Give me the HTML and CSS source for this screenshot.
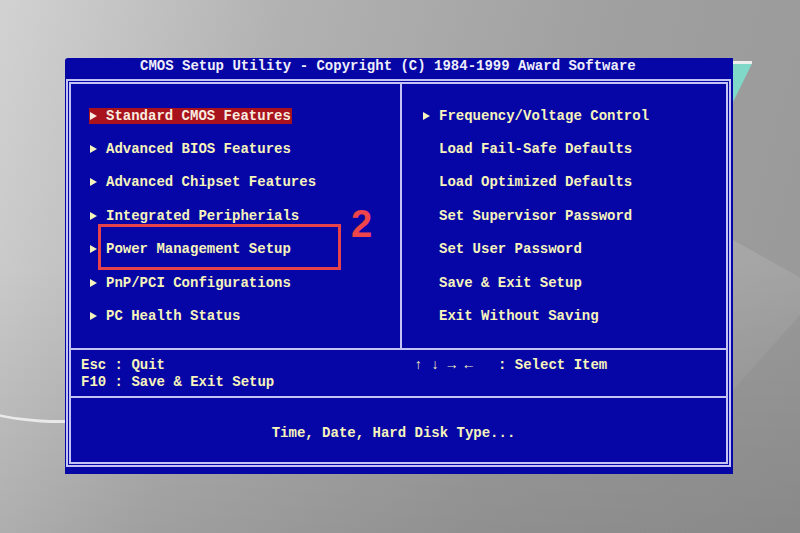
FILE: index.html
```html
<!DOCTYPE html>
<html lang="en">
<head>
  <meta charset="UTF-8" />
  <title>CMOS Setup Utility</title>
  <link rel="stylesheet" href="styles.css">
</head>
<body>
  <!-- photo background bits -->
  <div class="deco-teal"></div>
  <div class="deco-edge"></div>
  <div class="deco-shine"></div>
  <div class="deco-arc"></div>

  <div class="bios">
    <div class="title">CMOS Setup Utility - Copyright (C) 1984-1999 Award Software</div>

    <div class="frame">
      <div class="menu">
        <ul class="col left">
          <li class="sub"><span class="sel">Standard CMOS Features</span></li>
          <li class="sub"><span>Advanced BIOS Features</span></li>
          <li class="sub"><span>Advanced Chipset Features</span></li>
          <li class="sub"><span>Integrated Peripherials</span></li>
          <li class="sub"><span>Power Management Setup</span></li>
          <li class="sub"><span>PnP/PCI Configurations</span></li>
          <li class="sub"><span>PC Health Status</span></li>
        </ul>
        <ul class="col right">
          <li class="sub"><span>Frequency/Voltage Control</span></li>
          <li class="plain"><span>Load Fail-Safe Defaults</span></li>
          <li class="plain"><span>Load Optimized Defaults</span></li>
          <li class="plain"><span>Set Supervisor Password</span></li>
          <li class="plain"><span>Set User Password</span></li>
          <li class="plain"><span>Save &amp; Exit Setup</span></li>
          <li class="plain"><span>Exit Without Saving</span></li>
        </ul>
      </div>

      <div class="keys">
        <div>Esc : Quit</div>
        <div>↑ ↓ → ←   : Select Item</div>
        <div>F10 : Save &amp; Exit Setup</div>
        <div></div>
      </div>

      <div class="help">Time, Date, Hard Disk Type...</div>
    </div>

    <!-- annotation -->
    <div class="mark-box"></div>
    <div class="mark-num">2</div>
  </div>
</body>
</html>
```

FILE: styles.css
```css
body {
  margin: 0;
  height: 533px;
  overflow: hidden;
  position: relative;
  font-family: "Liberation Mono", "DejaVu Sans Mono", monospace;
  background:
    linear-gradient(180deg, rgba(0,0,0,0) 50%, rgba(0,0,0,0.1) 100%),
    linear-gradient(105deg, #d2d2d2 0%, #b2b2b2 30%, #a0a0a0 65%, #989898 100%);
}
.deco-teal {
  position: absolute;
  left: 731px;
  top: 62px;
  width: 21px;
  height: 40px;
  background: #7fd8c8;
  clip-path: polygon(0 4%, 100% 4%, 10% 100%, 0 100%);
}
.deco-edge {
  position: absolute;
  left: 733px;
  top: 61px;
  width: 19px;
  height: 3px;
  background: #eeeeee;
}
.deco-shine {
  position: absolute;
  left: 733px;
  top: 240px;
  width: 67px;
  height: 150px;
  background: linear-gradient(160deg, rgba(255,255,255,0.12), rgba(255,255,255,0.03));
  clip-path: polygon(0 0, 100% 25%, 100% 50%, 0 100%);
}
.deco-arc {
  position: absolute;
  left: -40px;
  top: 360px;
  width: 200px;
  height: 60px;
  border-radius: 50%;
  border-bottom: 3px solid rgba(255,255,255,0.7);
}
.bios {
  position: relative;
  width: 668px;
  height: 416px;
  margin: 58px 0 0 65px;
  background-color: #0606a6;
  color: #f6f4bc;
  font-size: 14px;
  font-weight: bold;
  box-sizing: border-box;
  padding: 0 2px 7px 1px;
  border-top-left-radius: 3px;
}
.title {
  height: 21px;
  line-height: 16px;
  padding-left: 74px;
  color: #eeeefa;
  white-space: pre;
}
.frame {
  border: 5px double #c4c4f4;
  height: 388px;
  box-sizing: border-box;
  display: flex;
  flex-direction: column;
}
.menu {
  display: flex;
  height: 264px;
  border-bottom: 2px solid #c4c4f4;
}
.col {
  list-style: none;
  margin: 0;
  padding: 15px 0 0;
}
.col.left {
  width: 331px;
  padding-left: 18px;
  box-sizing: border-box;
  border-right: 2px solid #c4c4f4;
}
.col.right {
  padding-left: 20px;
}
.col li {
  height: 33.4px;
  display: flex;
  align-items: center;
  white-space: pre;
}
.col li span {
  display: inline-flex;
  align-items: center;
  height: 16px;
  padding: 0 1px;
}
.col li.sub span::before {
  content: "";
  width: 0;
  height: 0;
  border-left: 7px solid currentColor;
  border-top: 4.5px solid transparent;
  border-bottom: 4.5px solid transparent;
  margin-right: 9px;
}
.col li.plain span {
  padding-left: 17px;
}
.col li span.sel {
  background-color: #a8121c;
  color: #f8ece0;
}
.keys {
  height: 48px;
  box-sizing: border-box;
  padding: 7px 0 0 10px;
  display: grid;
  grid-template-columns: 333px auto;
  grid-auto-rows: 17px;
  line-height: 17px;
  white-space: pre;
  border-bottom: 2px solid #c4c4f4;
}
.help {
  flex: 1;
  padding-top: 8px;
  line-height: 54px;
  text-align: center;
  padding-right: 10px;
}
.mark-box {
  position: absolute;
  left: 33px;
  top: 166px;
  width: 243px;
  height: 46px;
  box-sizing: border-box;
  border: 3px solid #e6424c;
}
.mark-num {
  position: absolute;
  left: 286px;
  top: 147px;
  font-family: "Liberation Sans", Arial, sans-serif;
  font-size: 38px;
  line-height: 1;
  font-weight: bold;
  color: #ee444c;
}
```
